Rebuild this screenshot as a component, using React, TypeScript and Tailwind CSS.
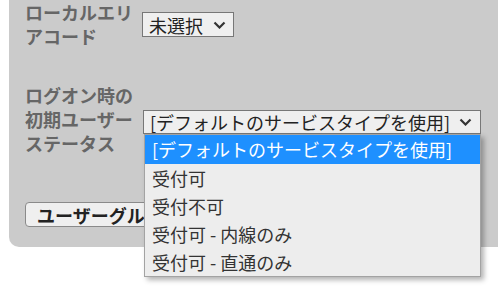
import React from "react";

const Chevron = () => (
  <svg width="13" height="8" viewBox="0 0 13 8" className="shrink-0">
    <polyline points="1.5,1.5 6.5,6.5 11.5,1.5" fill="none" stroke="#333" strokeWidth="2.2" />
  </svg>
);

export default function App() {
  const items = ["受付可", "受付不可", "受付可 - 内線のみ", "受付可 - 直通のみ"];
  return (
    <div className="relative w-[498px] h-[290px] bg-white overflow-hidden font-['Noto_Sans_CJK_JP','Noto_Sans',sans-serif]">
      <div className="ml-[9px] h-[247px] bg-[#cbcbcb] rounded-bl-[10px] pl-[16px] flex flex-col">
        <div className="flex items-start">
          <div className="w-[117px] text-[18px] leading-[24px] font-bold text-[#666666]">
            ローカルエリ
            <br />
            アコード
          </div>
          <div className="mt-[12px] h-[25px] w-[92px] border border-[#777777] bg-[#efefef] flex items-center justify-between pl-[6px] pr-[7px] text-[18px] leading-[22px] text-[#222222]">
            <span>未選択</span>
            <Chevron />
          </div>
        </div>
        <div className="flex items-start mt-[35px]">
          <div className="w-[118px] text-[18px] leading-[24px] font-bold text-[#666666]">
            ログオン時の
            <br />
            初期ユーザー
            <br />
            ステータス
          </div>
          <div className="mt-[27px] h-[24px] w-[338px] border border-[#777777] bg-[#efefef] flex items-center justify-between pl-[6px] pr-[8px] text-[18px] leading-[22px] text-[#222222]">
            <span>[デフォルトのサービスタイプを使用]</span>
            <Chevron />
          </div>
        </div>
        <div className="mt-[47px]">
          <button className="h-[25px] rounded-[4px] border border-[#8a8a8a] bg-[#efefef] px-[11px] text-[18px] leading-[22px] font-bold text-[#222222] whitespace-nowrap">
            ユーザーグループ設定
          </button>
        </div>
      </div>
      <div className="absolute left-[144px] top-[134px] w-[337px] border border-[#a3a3a3] bg-[#ededed] shadow-[3px_3px_5px_rgba(0,0,0,0.3)] text-[18px] leading-[28px] text-[#333333]">
        <div className="h-[29px] bg-[#1e90ff] text-white pl-[7px]">[デフォルトのサービスタイプを使用]</div>
        {items.map((t) => (
          <div key={t} className="h-[28px] pl-[7px]">
            {t}
          </div>
        ))}
      </div>
    </div>
  );
}
